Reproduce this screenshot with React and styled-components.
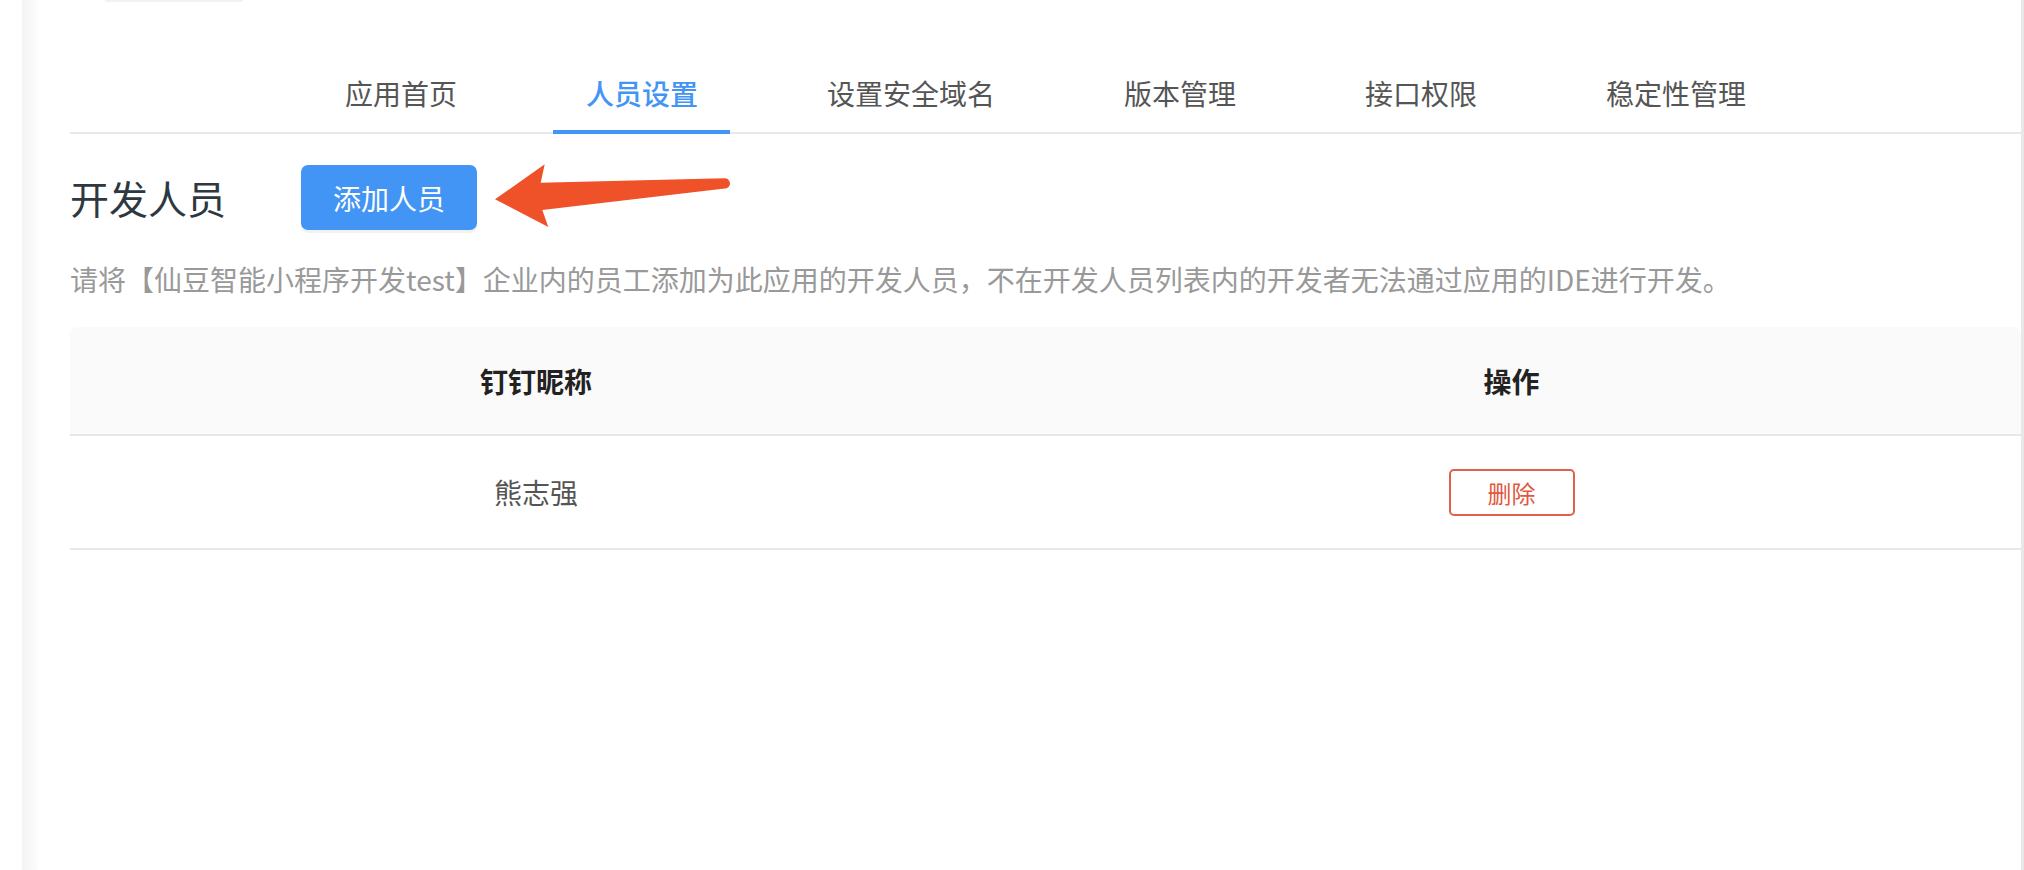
import styled, { createGlobalStyle } from "styled-components";

const GlobalStyle = createGlobalStyle`
  html, body {
    margin: 0;
    padding: 0;
    background: #fff;
  }
  body {
    font-family: "Noto Sans CJK SC", "Noto Sans", "Liberation Sans", sans-serif;
  }
  * {
    box-sizing: border-box;
  }
`;

const Page = styled.div`
  display: flex;
  height: 870px;
  background: #fff;
`;

const Gutter = styled.div`
  width: 22px;
  flex-shrink: 0;
  background: #fff;
`;

const SideShade = styled.div`
  width: 16px;
  flex-shrink: 0;
  background: linear-gradient(to right, #f4f4f4, #fdfdfd);
`;

const Panel = styled.main`
  flex: 1;
  padding-left: 32px;
  border-right: 3px solid #e8e8e8;
  display: flex;
  flex-direction: column;
`;

const TopStub = styled.div`
  width: 138px;
  height: 2px;
  margin-left: 35px;
  border-radius: 0 0 6px 6px;
  background: #f2f2f2;
`;

const Tabs = styled.nav`
  display: flex;
  justify-content: center;
  gap: 64px;
  padding-top: 71px;
  border-bottom: 2px solid #e8e8e8;
`;

const Tab = styled.div`
  padding: 0 32.5px 17px;
  margin-bottom: -2px;
  font-size: 28px;
  line-height: 40px;
  color: ${({ $active }) => ($active ? "#4294f5" : "#555")};
  font-weight: ${({ $active }) => ($active ? 500 : 400)};
  border-bottom: 4px solid ${({ $active }) => ($active ? "#4294f5" : "transparent")};
  white-space: nowrap;
  cursor: pointer;
`;

const SectionHead = styled.div`
  display: flex;
  align-items: center;
  margin-top: 31px;
  height: 65px;
`;

const Title = styled.h2`
  margin: 0;
  font-size: 39px;
  line-height: 1;
  font-weight: 400;
  color: #2e3841;
  letter-spacing: 0;
`;

const AddButton = styled.button`
  margin-left: 75px;
  width: 176px;
  height: 65px;
  border: none;
  border-radius: 7px;
  background: #4294f5;
  color: #fff;
  font-family: inherit;
  font-size: 28px;
  box-shadow: 0 3px 0 rgba(0, 0, 0, 0.05);
  cursor: pointer;
`;

const Arrow = styled.svg`
  margin: -4px 0 -1px 16px;
  flex-shrink: 0;
`;

const Hint = styled.p`
  margin: 29px 0 0;
  font-size: 28px;
  line-height: 40px;
  color: #999;
  white-space: nowrap;
`;

const Table = styled.div`
  margin-top: 28px;
  display: grid;
  grid-template-columns: 932px 1fr;
`;

const HeadCell = styled.div`
  height: 109px;
  display: flex;
  align-items: center;
  justify-content: center;
  background: #fafafa;
  border-bottom: 2px solid #e8e8e8;
  font-size: 28px;
  font-weight: 700;
  color: #222;
  border-radius: ${({ $first }) => ($first ? "8px 0 0 0" : "0 8px 0 0")};
`;

const Cell = styled.div`
  height: 114px;
  display: flex;
  align-items: center;
  justify-content: center;
  border-bottom: 2px solid #e8e8e8;
  font-size: 28px;
  color: #555;
`;

const DeleteButton = styled.button`
  width: 126px;
  height: 47px;
  border: 2px solid #e2604b;
  border-radius: 5px;
  background: #fff;
  color: #e0583f;
  font-family: inherit;
  font-size: 24px;
  cursor: pointer;
`;

const tabs = ["应用首页", "人员设置", "设置安全域名", "版本管理", "接口权限", "稳定性管理"];

const members = [{ id: 1, name: "熊志强" }];

export default function App() {
  return (
    <>
      <GlobalStyle />
      <Page>
        <Gutter />
        <SideShade />
        <Panel>
          <TopStub />
          <Tabs>
            {tabs.map((t) => (
              <Tab key={t} $active={t === "人员设置"}>
                {t}
              </Tab>
            ))}
          </Tabs>
          <SectionHead>
            <Title>开发人员</Title>
            <AddButton>添加人员</AddButton>
            <Arrow width="240" height="68" viewBox="0 0 240 68">
              <path
                d="M2 37.3 L51.7 2.3 L47.7 20.7 L231 16.3 A5.3 5.3 0 0 1 234 26.3 L49.3 48 L55.3 65 Z"
                fill="#ef5229"
              />
            </Arrow>
          </SectionHead>
          <Hint>
            请将【仙豆智能小程序开发test】企业内的员工添加为此应用的开发人员，不在开发人员列表内的开发者无法通过应用的IDE进行开发。
          </Hint>
          <Table>
            <HeadCell $first>钉钉昵称</HeadCell>
            <HeadCell>操作</HeadCell>
            {members.map((m) => (
              <>
                <Cell key={`n${m.id}`}>{m.name}</Cell>
                <Cell key={`a${m.id}`}>
                  <DeleteButton>删除</DeleteButton>
                </Cell>
              </>
            ))}
          </Table>
        </Panel>
      </Page>
    </>
  );
}
